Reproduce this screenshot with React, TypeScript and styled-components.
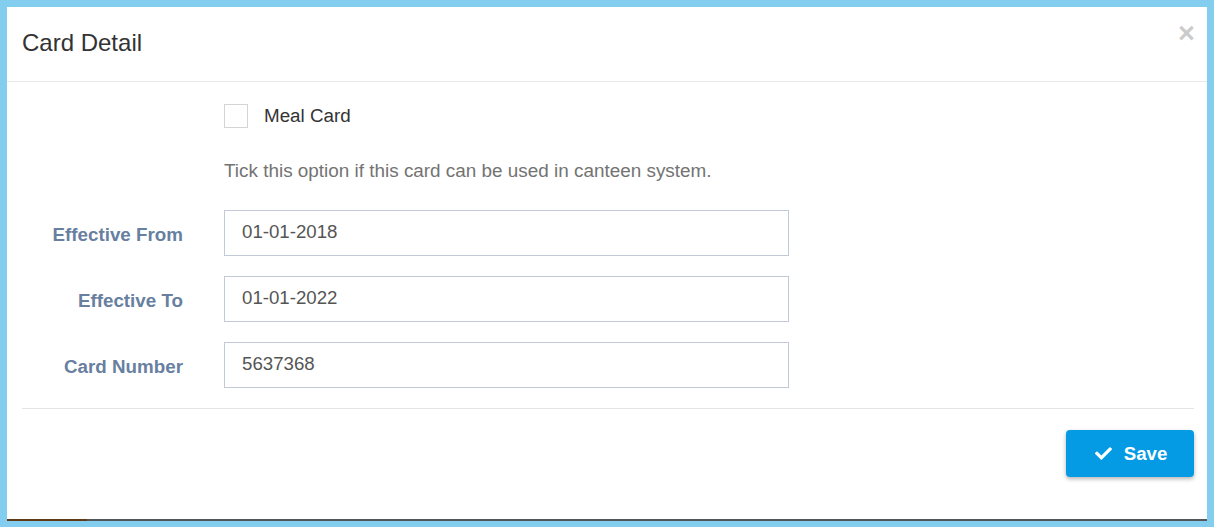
import React from "react";
import styled, { createGlobalStyle } from "styled-components";
import { FaCheck } from "react-icons/fa";

const GlobalStyle = createGlobalStyle`
  html, body {
    margin: 0;
    padding: 0;
    background: #83cdee;
    font-family: "Liberation Sans", Arial, sans-serif;
    font-size: 18.67px;
    color: #333;
  }
  * { box-sizing: border-box; }
`;

const Backdrop = styled.div`
  width: 1214px;
  height: 527px;
  padding: 7px 7px 6px 7px;
  background: #83cdee;
`;

const Modal = styled.div`
  width: 1200px;
  background: #fff;
  display: flex;
  flex-direction: column;
`;

const Header = styled.div`
  display: flex;
  align-items: flex-start;
  justify-content: space-between;
  height: 75px;
  padding: 20px 12px 20px 15px;
  border-bottom: 1px solid #e9e9e9;
`;

const Title = styled.h4`
  margin: -1px 0 0;
  font-size: 24px;
  font-weight: 400;
  line-height: 34px;
  color: #333;
`;

const Close = styled.button`
  border: 0;
  background: transparent;
  padding: 0;
  margin-top: -4px;
  font-family: "Liberation Sans", Arial, sans-serif;
  font-size: 29px;
  font-weight: 700;
  line-height: 20px;
  color: #000;
  opacity: 0.2;
  cursor: pointer;
`;

const Body = styled.div`
  padding: 22px 13px 20px 15px;
  display: flex;
  flex-direction: column;
`;

const Row = styled.div<{ $top?: number }>`
  display: grid;
  grid-template-columns: 202px 565px;
  align-items: center;
  margin-top: ${(p) => p.$top ?? 0}px;
`;

const Fields = styled.div`
  display: grid;
  row-gap: 20px;
  margin-top: 26px;
`;

const Label = styled.label`
  text-align: right;
  padding-right: 41px;
  padding-top: 2px;
  font-weight: 700;
  font-size: 18.8px;
  line-height: 27px;
  color: #687fa0;
`;

const CheckWrap = styled.label`
  grid-column: 2;
  display: flex;
  align-items: center;
  gap: 16px;
  height: 24px;
  font-size: 18.8px;
  color: #333;
`;

const Box = styled.span`
  width: 24px;
  height: 24px;
  border: 1px solid #d4d4d4;
  background: #fff;
`;

const Help = styled.p`
  grid-column: 2;
  margin: 0;
  font-size: 18.9px;
  line-height: 27px;
  color: #737373;
  white-space: nowrap;
`;

const Input = styled.input`
  width: 565px;
  height: 46px;
  border: 1px solid #c2cad8;
  padding: 0 16px 2px 17px;
  font-family: "Liberation Sans", Arial, sans-serif;
  font-size: 18.67px;
  color: #555;
  outline: none;
  border-radius: 0;
`;

const Footer = styled.div`
  margin: 0 13px 0 15px;
  border-top: 1px solid #e5e5e5;
  padding: 21px 0 42px;
  display: flex;
  justify-content: flex-end;
`;

const SaveButton = styled.button`
  width: 128px;
  height: 47px;
  border: 0;
  border-radius: 4px;
  background: #049be4;
  color: #fff;
  display: flex;
  align-items: center;
  justify-content: center;
  gap: 12px;
  padding: 0 0 0 2px;
  font-family: "Liberation Sans", Arial, sans-serif;
  font-size: 18.67px;
  font-weight: 700;
  box-shadow: 0 2px 4px rgba(0, 0, 0, 0.3);
  cursor: pointer;
`;

const Strip = styled.div`
  display: flex;
  height: 2px;
`;

const StripPart = styled.div<{ $color: string; $w?: string }>`
  background: ${(p) => p.$color};
  flex: ${(p) => (p.$w ? `0 0 ${p.$w}` : "1")};
`;

const fields = [
  { label: "Effective From", value: "01-01-2018" },
  { label: "Effective To", value: "01-01-2022" },
  { label: "Card Number", value: "5637368" },
];

export default function App() {
  return (
    <>
      <GlobalStyle />
      <Backdrop>
        <Modal>
          <Header>
            <Title>Card Detail</Title>
            <Close aria-label="Close">×</Close>
          </Header>
          <Body>
            <Row>
              <CheckWrap>
                <Box />
                Meal Card
              </CheckWrap>
            </Row>
            <Row $top={29}>
              <Help>Tick this option if this card can be used in canteen system.</Help>
            </Row>
            <Fields>
              {fields.map((f) => (
                <Row key={f.label}>
                  <Label>{f.label}</Label>
                  <Input defaultValue={f.value} />
                </Row>
              ))}
            </Fields>
          </Body>
          <Footer>
            <SaveButton>
              <FaCheck size={17} />
              Save
            </SaveButton>
          </Footer>
        </Modal>
        <Strip>
          <StripPart $color="#5e3b15" $w="80px" />
          <StripPart $color="#52575b" />
        </Strip>
      </Backdrop>
    </>
  );
}
